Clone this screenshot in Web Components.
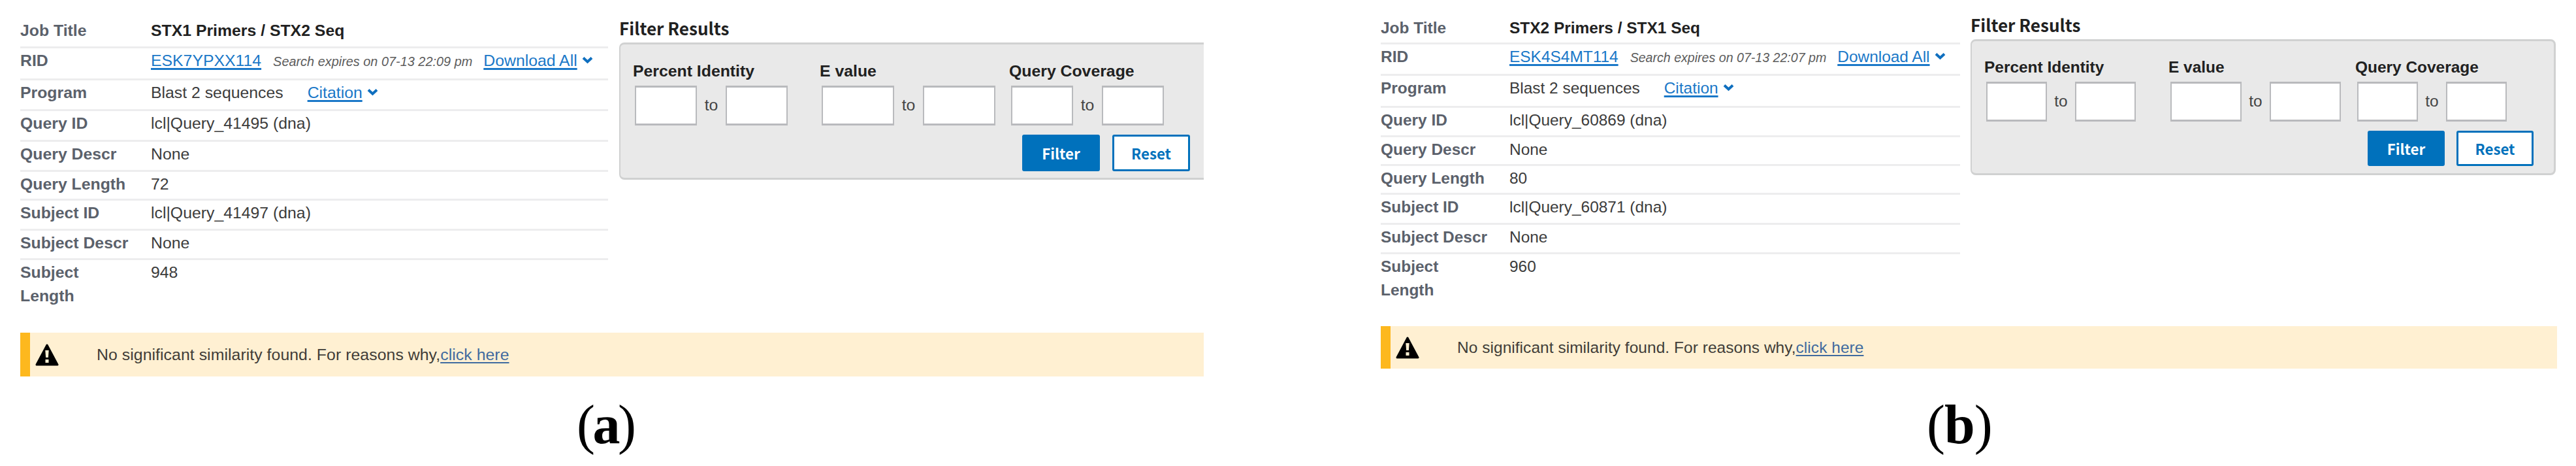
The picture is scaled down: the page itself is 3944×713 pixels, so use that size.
<!DOCTYPE html>
<html>

<head>
    <meta charset="utf-8">
    <title>BLAST results</title>
    <style>
        body {
            margin: 0;
            background: #fff;
            font-family: "Liberation Sans", Arial, sans-serif;
        }

        main {
            display: flex;
            align-items: flex-start;
            height: 713px;
            overflow: hidden;
        }
    </style>
</head>

<body>
    <main>
        <blast-result id="a"></blast-result>
        <blast-result id="b"></blast-result>
    </main>
    <script>
        // sizes of each panel, they are not quite the same scale
        const panels = {
            a: {
                title: 'STX1 Primers / STX2 Seq', rid: 'ESK7YPXX114', expires: '07-13 22:09 pm',
                query: 'lcl|Query_41495 (dna)', queryLength: '72',
                subject: 'lcl|Query_41497 (dna)', subjectLength: '948',
                rows: [46, 49, 47, 47, 46, 44, 46, 45, 80],
                vars: {
                    left: '31px', width: '1812px', font: '24.8px', small: '19.9px', table: '900px', label: '200px',
                    top: '28px', 'top-h': '509px', gap: '17px', 'box-h': '210px', 'box-w': '895px', 'filter-top': '29px',
                    'title-h': '36px', 'box-pad': '24px', 'box-border': '3px', 'box-end': '0', 'radius': '8px 0 0 8px',
                    'f1': '286px', 'f2': '290px', 'w1': '95px', 'w2': '111px', 'to': '44px', 'btn-w': '119px', 'btn-h': '56px',
                    'btn-gap': '19px', 'btn-right': '21px', 'alert-h': '67px', 'cap-top': '26px', 'cap-left': '852px', 'cap-gap': '-3.5px'
                }
            },
            b: {
                title: 'STX2 Primers / STX1 Seq', rid: 'ESK4S4MT114', expires: '07-13 22:07 pm',
                query: 'lcl|Query_60869 (dna)', queryLength: '80',
                subject: 'lcl|Query_60871 (dna)', subjectLength: '960',
                rows: [44, 48, 49, 45, 44, 44, 46, 45, 80],
                vars: {
                    left: '271px', width: '1801px', font: '24.45px', small: '19.6px', table: '887px', label: '197px',
                    top: '24px', 'top-h': '499px', gap: '16px', 'box-h': '208px', 'box-w': '896px', 'filter-top': '24px',
                    'title-h': '36px', 'box-pad': '23px', 'box-border': '3px', 'box-end': '3px', 'radius': '8px',
                    'f1': '282px', 'f2': '286px', 'w1': '93px', 'w2': '109px', 'to': '43px', 'btn-w': '118px', 'btn-h': '54px',
                    'btn-gap': '18px', 'btn-right': '31px', 'alert-h': '65px', 'cap-top': '38px', 'cap-left': '836px', 'cap-gap': '-1px'
                }
            }
        };

        class MenuLink extends HTMLElement {
            constructor() {
                super();
                this.attachShadow({ mode: 'open' }).innerHTML = `
                    <style>
                        :host { display: inline-flex; align-items: baseline; gap: 7px; }
                        a { color: #1a78c8; text-decoration: underline; text-decoration-thickness: 3px; text-underline-offset: 3px; }
                        svg { width: 17px; height: 12px; position: relative; top: -3px; }
                    </style>
                    <a><slot></slot></a>
                    <svg viewBox="0 0 17 12"><path d="M2 2.5 8.5 8.5 15 2.5" fill="none" stroke="#0f6fbf" stroke-width="4"/></svg>`;
            }
        }

        class JobRow extends HTMLElement {
            constructor() {
                super();
                this.attachShadow({ mode: 'open' }).innerHTML = `
                    <style>
                        :host { display: grid; grid-template-columns: var(--label) 1fr; box-sizing: border-box;
                            padding-top: 1px; border-bottom: 3px solid #ededee; line-height: 36px; }
                        :host(:last-of-type) { border-bottom: 0; }
                        .label { color: #5b616b; font-weight: bold; padding-right: 24px; }
                        .value { color: #3c3c3c; white-space: nowrap; }
                    </style>
                    <div class="label">${this.getAttribute('label')}</div>
                    <div class="value"><slot></slot></div>`;
            }
        }

        class FilterRange extends HTMLElement {
            constructor() {
                super();
                this.attachShadow({ mode: 'open' }).innerHTML = `
                    <style>
                        :host { display: block; color: #212121; }
                        b { display: block; line-height: 28px; white-space: nowrap; }
                        .range { display: grid; grid-template-columns: var(--w) var(--to) var(--w); margin: 8px 0 0 3px; }
                        i { height: 61px; box-sizing: border-box; background: #fff; border: solid #b9babd; border-width: 3px 2px; }
                        span { text-align: center; line-height: 59px; color: #444; }
                    </style>
                    <b><slot></slot></b>
                    <div class="range"><i></i><span>to</span><i></i></div>`;
            }
        }

        class FilterBox extends HTMLElement {
            constructor() {
                super();
                this.attachShadow({ mode: 'open' }).innerHTML = `
                    <style>
                        :host { display: block; width: var(--box-w); margin-top: var(--filter-top); }
                        h2 { margin: 0; height: var(--title-h); color: #212121;
                            font: bold 26.1px/28px "Noto Sans CJK SC", sans-serif; }
                        .box { box-sizing: border-box; height: var(--box-h); background: #e9e9e9; border: var(--box-border) solid #d0d1d1;
                            border-right-width: var(--box-end); border-left-width: 2px; border-radius: var(--radius);
                            padding: var(--box-pad) 0 0 19px; display: flex; flex-direction: column; }
                        .ranges { display: grid; grid-template-columns: var(--f1) var(--f2) 1fr; padding-top: 3px; }
                        .buttons { display: flex; justify-content: flex-end; gap: var(--btn-gap); margin: 14px var(--btn-right) 0 0; }
                        button { width: var(--btn-w); height: var(--btn-h); padding: 0; border: 3px solid #0071bc; border-radius: 3px;
                            font: bold 22.3px/40px "Noto Sans CJK SC", sans-serif; background: #fff; color: #0071bc; }
                        .go { background: #0071bc; color: #fff; }
                    </style>
                    <h2>Filter Results</h2>
                    <div class="box">
                        <div class="ranges">
                            <filter-range style="--w: var(--w1)">Percent Identity</filter-range>
                            <filter-range style="--w: var(--w2)">E value</filter-range>
                            <filter-range style="--w: var(--w1)">Query Coverage</filter-range>
                        </div>
                        <div class="buttons"><button class="go">Filter</button><button>Reset</button></div>
                    </div>`;
            }
        }

        class WarningBar extends HTMLElement {
            constructor() {
                super();
                this.attachShadow({ mode: 'open' }).innerHTML = `
                    <style>
                        :host { display: flex; align-items: center; box-sizing: border-box; height: var(--alert-h);
                            background: #fff0d2; border-left: 15px solid #fdb81e; color: #3f3d38; white-space: nowrap; }
                        svg { width: 36px; height: 34px; margin: 0 58px 0 8px; }
                        div { letter-spacing: .06px; }
                    </style>
                    <svg viewBox="0 0 36 34">
                        <path d="M18 2 34 32H2Z" stroke="#000" stroke-width="3" stroke-linejoin="round"/>
                        <path d="M15.3 10h5.4l-.8 11h-3.8zM15.5 24h5v5h-5z" fill="#fff0d2"/>
                    </svg>
                    <div><slot></slot></div>`;
            }
        }

        class BlastResult extends HTMLElement {
            constructor() {
                super();
                const p = panels[this.id];
                for (const name in p.vars) {
                    this.style.setProperty('--' + name, p.vars[name]);
                }
                this.attachShadow({ mode: 'open' }).innerHTML = `
                    <style>
                        :host { display: block; flex: none; width: var(--width); margin-left: var(--left); font-size: var(--font); }
                        .top { display: flex; gap: var(--gap); height: var(--top-h); }
                        .job { width: var(--table); padding-top: var(--top); display: grid; align-content: start;
                            grid-template-rows: ${p.rows.map(h => h + 'px').join(' ')}; }
                        b { color: #212121; }
                        a { color: #1a78c8; text-decoration: underline; text-decoration-thickness: 3px; text-underline-offset: 3px; }
                        em { font-size: var(--small); margin: 0 17px 0 18px; color: #5c5c5c; }
                        .cite { margin-left: 37px; }
                        warning-bar a { color: #3f6b9f; text-decoration-thickness: 2px; }
                        .caption { margin: var(--cap-top) 0 0 var(--cap-left); color: #000; letter-spacing: var(--cap-gap);
                            font: 84px/96px "Liberation Serif", serif; white-space: nowrap; }
                        .caption b { color: #000; }
                    </style>
                    <div class="top">
                        <div class="job">
                            <job-row label="Job Title"><b>${p.title}</b></job-row>
                            <job-row label="RID"><a>${p.rid}</a><em>Search expires on ${p.expires}</em><menu-link>Download All</menu-link></job-row>
                            <job-row label="Program">Blast 2 sequences<menu-link class="cite">Citation</menu-link></job-row>
                            <job-row label="Query ID">${p.query}</job-row>
                            <job-row label="Query Descr">None</job-row>
                            <job-row label="Query Length">${p.queryLength}</job-row>
                            <job-row label="Subject ID">${p.subject}</job-row>
                            <job-row label="Subject Descr">None</job-row>
                            <job-row label="Subject Length">${p.subjectLength}</job-row>
                        </div>
                        <filter-box></filter-box>
                    </div>
                    <warning-bar>No significant similarity found. For reasons why,<a>click here</a></warning-bar>
                    <div class="caption">(<b>${this.id}</b>)</div>`;
            }
        }

        customElements.define('menu-link', MenuLink);
        customElements.define('job-row', JobRow);
        customElements.define('filter-range', FilterRange);
        customElements.define('filter-box', FilterBox);
        customElements.define('warning-bar', WarningBar);
        customElements.define('blast-result', BlastResult);
    </script>
</body>

</html>
